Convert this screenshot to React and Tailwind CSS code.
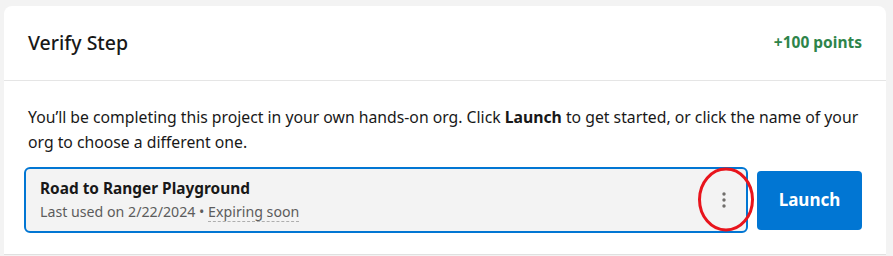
import React from 'react';

function DotsIcon() {
  return (
    <svg width="4" height="16" viewBox="0 0 4 16" className="text-[#706e6b]">
      <circle cx="2" cy="2" r="1.7" fill="currentColor" />
      <circle cx="2" cy="8" r="1.7" fill="currentColor" />
      <circle cx="2" cy="14" r="1.7" fill="currentColor" />
    </svg>
  );
}

export default function App() {
  return (
    <div
      className="h-[256px] w-[893px] bg-[#f3f3f3] pt-1.5 pl-1 overflow-hidden"
      style={{ fontFamily: '"Noto Sans", "Open Sans", sans-serif' }}
    >
      <div className="w-[882px] h-[249px] bg-white rounded-t-lg border-b border-[#e0e0e0]">
        <div className="h-[75px] px-6 flex items-center justify-between border-b border-[#e5e5e5]">
          <h2 className="text-[19.5px] font-medium text-[#181818]">Verify Step</h2>
          <span className="text-[15.5px] font-bold text-[#2e844a]">+100 points</span>
        </div>

        <p className="px-6 pt-6 text-[15.75px] leading-[25px] text-[#181818]">
          You’ll be completing this project in your own hands-on org. Click <b className="font-bold">Launch</b> to get
          started, or click the name of your org to choose a different one.
        </p>

        <div className="pl-5 pr-6 pt-3 flex items-center gap-[9px]">
          <div className="relative w-[724px] h-[66px] rounded-md border-2 border-[#0176d3] bg-[#f3f3f3] pl-[14px] pr-5 flex items-center justify-between">
            <div className="flex flex-col">
              <span className="text-[15.4px] font-bold text-[#181818] leading-[22px]">Road to Ranger Playground</span>
              <span className="text-[14.2px] text-[#5c5c5c] leading-[23px]">
                Last used on 2/22/2024 •{' '}
                <span className="border-b border-dashed border-[#aeaeae]">Expiring soon</span>
              </span>
            </div>
            <DotsIcon />
            <svg
              className="absolute left-[671px] top-[-2px] pointer-events-none"
              width="58"
              height="66"
              viewBox="0 0 58 66"
            >
              <ellipse cx="29" cy="32.5" rx="26.5" ry="30.5" fill="none" stroke="#e8141c" strokeWidth="3" />
            </svg>
          </div>
          <button className="w-[105px] h-[59px] rounded bg-[#0176d3] text-white text-[17px] font-bold">
            Launch
          </button>
        </div>
      </div>
    </div>
  );
}
